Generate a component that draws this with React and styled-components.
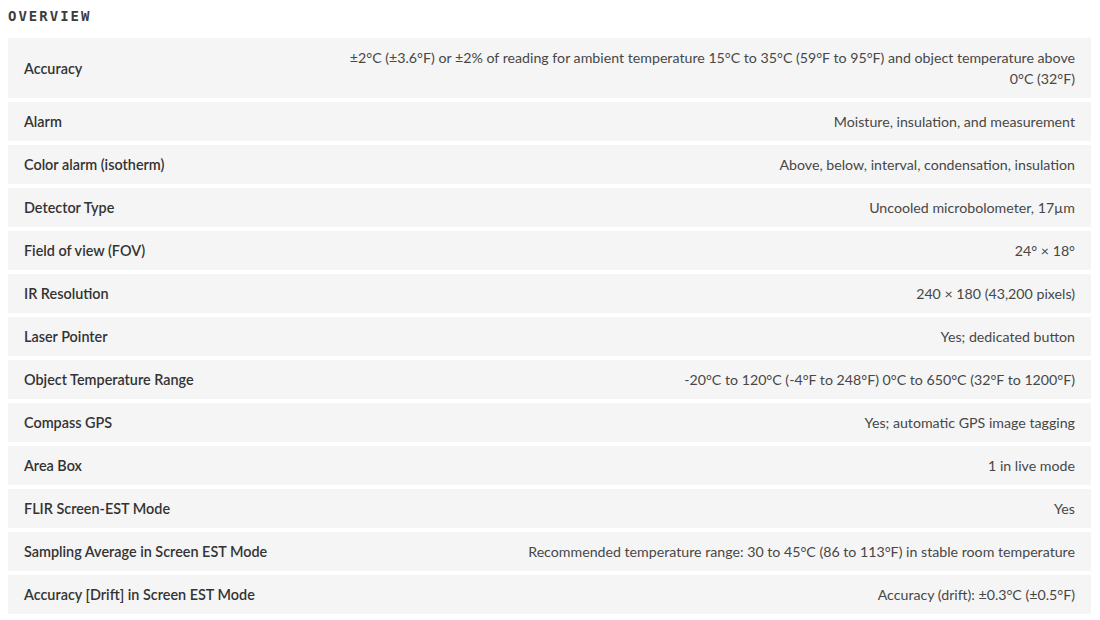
import React from 'react';
import styled, { createGlobalStyle } from 'styled-components';

const GlobalStyle = createGlobalStyle`
  body {
    margin: 0;
    background: #ffffff;
    font-family: 'Lato', 'Open Sans', sans-serif;
  }
`;

const Wrapper = styled.section`
  padding: 8px 9px 0 8px;
`;

const Heading = styled.h2`
  margin: 0 0 14px;
  font-family: 'DejaVu Sans Mono', monospace;
  font-size: 14px;
  line-height: 16px;
  font-weight: 700;
  letter-spacing: 2px;
  color: #3c3c3c;
`;

const SpecList = styled.dl`
  display: flex;
  flex-direction: column;
  gap: 4px;
  margin: 0;
`;

const SpecRow = styled.div`
  display: flex;
  align-items: center;
  justify-content: space-between;
  background: #f5f5f5;
  padding: 9px 16px;
  min-height: 21px;
`;

const Label = styled.dt`
  flex: 0 0 300px;
  font-size: 14.4px;
  line-height: 21px;
  font-weight: 600;
  color: #333333;
`;

const Value = styled.dd`
  flex: 1;
  margin: 0;
  text-align: right;
  font-size: 14.2px;
  line-height: 21px;
  color: #474747;
`;

const specs = [
  {
    label: 'Accuracy',
    value: '±2°C (±3.6°F) or ±2% of reading for ambient temperature 15°C to 35°C (59°F to 95°F) and object temperature above 0°C (32°F)',
  },
  { label: 'Alarm', value: 'Moisture, insulation, and measurement' },
  { label: 'Color alarm (isotherm)', value: 'Above, below, interval, condensation, insulation' },
  { label: 'Detector Type', value: 'Uncooled microbolometer, 17µm' },
  { label: 'Field of view (FOV)', value: '24° × 18°' },
  { label: 'IR Resolution', value: '240 × 180 (43,200 pixels)' },
  { label: 'Laser Pointer', value: 'Yes; dedicated button' },
  { label: 'Object Temperature Range', value: '-20°C to 120°C (-4°F to 248°F) 0°C to 650°C (32°F to 1200°F)' },
  { label: 'Compass GPS', value: 'Yes; automatic GPS image tagging' },
  { label: 'Area Box', value: '1 in live mode' },
  { label: 'FLIR Screen-EST Mode', value: 'Yes' },
  {
    label: 'Sampling Average in Screen EST Mode',
    value: 'Recommended temperature range: 30 to 45°C (86 to 113°F) in stable room temperature',
  },
  { label: 'Accuracy [Drift] in Screen EST Mode', value: 'Accuracy (drift): ±0.3°C (±0.5°F)' },
];

const App = () => (
  <>
    <GlobalStyle />
    <Wrapper>
      <Heading>OVERVIEW</Heading>
      <SpecList>
        {specs.map(spec => (
          <SpecRow key={spec.label}>
            <Label>{spec.label}</Label>
            <Value>{spec.value}</Value>
          </SpecRow>
        ))}
      </SpecList>
    </Wrapper>
  </>
);

export default App;
